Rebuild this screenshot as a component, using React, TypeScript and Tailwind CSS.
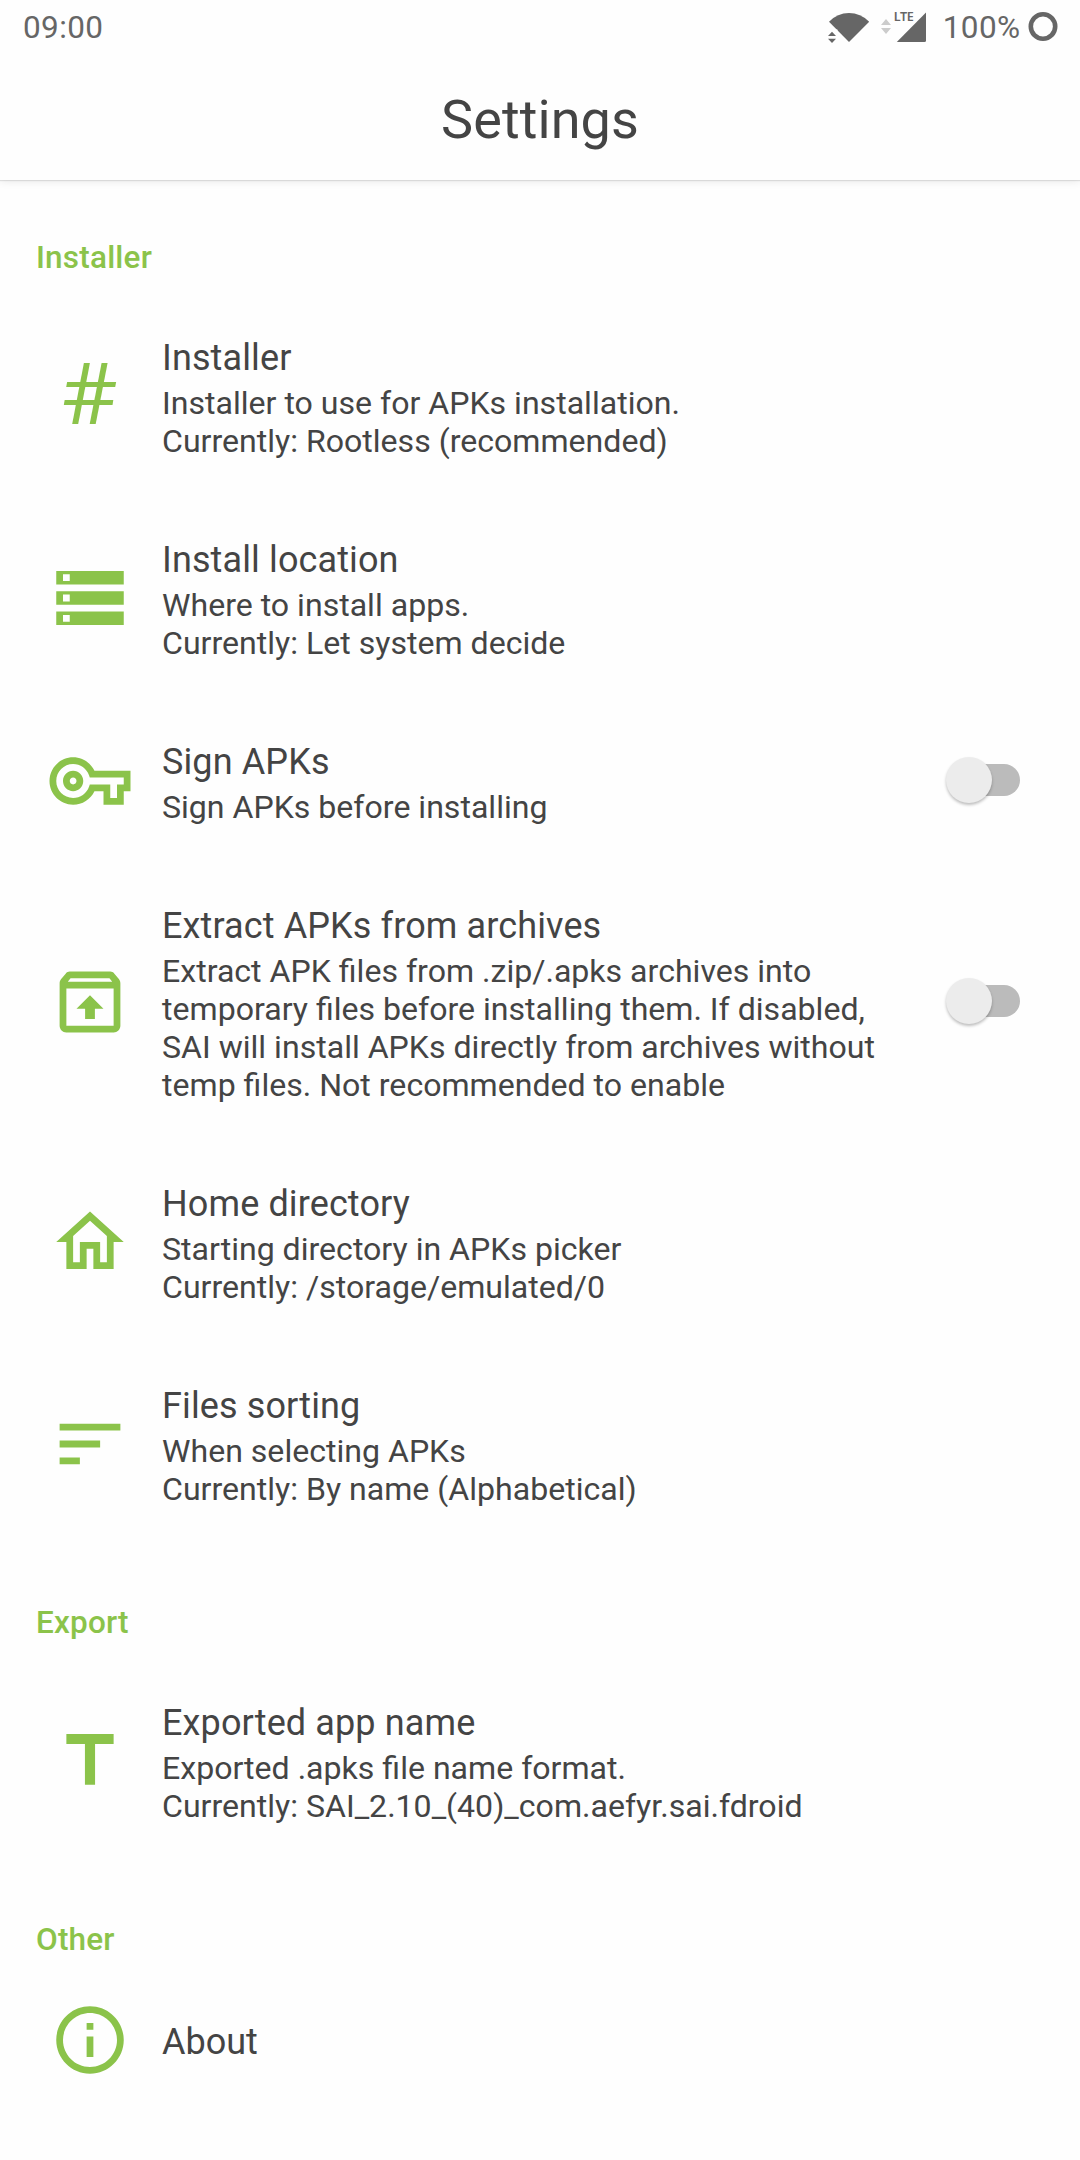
import React, { useState } from "react";

type IconName = "hash" | "storage" | "key" | "unarchive" | "home" | "sort" | "title" | "info";

const iconPaths: Record<Exclude<IconName, "hash">, string> = {
  storage: "M2 20h20v-4H2v4zm2-3h2v2H4v-2zM2 4v4h20V4H2zm4 3H4V5h2v2zm-4 7h20v-4H2v4zm2-3h2v2H4v-2z",
  key: "M22 19h-6v-4h-2.68c-1.14 2.42-3.6 4-6.32 4-3.86 0-7-3.14-7-7s3.14-7 7-7c2.72 0 5.17 1.58 6.32 4H24v6h-2v4zm-4-2h2v-4h2v-2H11.94l-.23-.67C11.01 8.34 9.11 7 7 7c-2.76 0-5 2.24-5 5s2.24 5 5 5c2.11 0 4.01-1.34 4.71-3.33l.23-.67H18v4zM7 15c-1.65 0-3-1.35-3-3s1.35-3 3-3 3 1.35 3 3-1.35 3-3 3zm0-4c-.55 0-1 .45-1 1s.45 1 1 1 1-.45 1-1-.45-1-1-1z",
  unarchive:
    "M20.55 5.22l-1.39-1.68C18.88 3.21 18.47 3 18 3H6c-.47 0-.88.21-1.15.55L3.46 5.22C3.17 5.57 3 6.01 3 6.5V19c0 1.1.89 2 2 2h14c1.1 0 2-.9 2-2V6.5c0-.49-.17-.93-.45-1.28zM6.24 5h11.52l.83 1H5.42l.82-1zM5 19V8h14v11H5zm3-5h2.55v3h2.9v-3H16l-4-4-4 4z",
  home: "M12 5.69l5 4.5V18h-2v-6H9v6H7v-7.81l5-4.5M12 3L2 12h3v8h6v-6h2v6h6v-8h3L12 3z",
  sort: "M3 18h6v-2H3v2zM3 6v2h18V6H3zm0 7h12v-2H3v2z",
  title: "M5 4v3h5.5v12h3V7H19V4z",
  info: "M11 7h2v2h-2zm0 4h2v6h-2zm1-9C6.48 2 2 6.48 2 12s4.48 10 10 10 10-4.48 10-10S17.52 2 12 2zm0 18c-4.41 0-8-3.59-8-8s3.59-8 8-8 8 3.59 8 8-3.59 8-8 8z",
};

function Icon({ name }: { name: IconName }) {
  if (name === "hash") {
    return (
      <svg className="size-[82px]" viewBox="-0.5 -0.5 82 82" fill="currentColor">
        <path d="M34.4 7.5h6L28.7 68.5h-6z" />
        <path d="M52.1 7.5h6L46.2 68.5h-6z" />
        <path d="M17.6 26.5h49l-.9 5h-49z" />
        <path d="M15.2 44.6h48.6l-.8 5H14.3z" />
      </svg>
    );
  }
  return (
    <svg className="size-[82px]" viewBox="-0.148 -0.148 24.296 24.296" fill="currentColor">
      <path d={iconPaths[name]} />
    </svg>
  );
}

function Switch() {
  const [on, setOn] = useState(false);
  return (
    <button
      role="switch"
      aria-checked={on}
      onClick={() => setOn(!on)}
      className="relative mr-[60px] mb-[2px] flex h-12 w-[75px] items-center justify-end"
    >
      <span className={on ? "h-8 w-[64px] rounded-full bg-[#c5e1a5]" : "h-8 w-[64px] rounded-full bg-[#bbbbbb]"} />
      <span
        className={
          on
            ? "absolute top-px right-0 size-[46px] rounded-full bg-[#8bc34a] shadow-[0_2px_3px_rgba(0,0,0,0.3)]"
            : "absolute top-px left-px size-[46px] rounded-full bg-[#ececec] shadow-[0_2px_3px_rgba(0,0,0,0.25)]"
        }
      />
    </button>
  );
}

interface RowProps {
  icon: IconName;
  title: string;
  lines: string[];
  toggle?: boolean;
}

function Row({ icon, title, lines, toggle }: RowProps) {
  return (
    <li className="flex items-center">
      <div className="ml-[49px] w-[113px] shrink-0 text-[#8bc34a]">
        <Icon name={icon} />
      </div>
      <div className="flex-1 pt-[42px] pb-[37px]">
        <h3 className="text-[36px] leading-[42px] tracking-[0.12px]">{title}</h3>
        <p className="mt-[5px] text-[32.1px] leading-[38px]">
          {lines.map((line) => (
            <span key={line} className="block whitespace-nowrap">
              {line}
            </span>
          ))}
        </p>
      </div>
      {toggle && <Switch />}
    </li>
  );
}

function SectionTitle({ children }: { children: string }) {
  return (
    <h2 className="h-[115px] pt-[59px] pl-9 text-[31.5px] leading-[38px] font-medium tracking-[0.2px] text-[#8bc34a]">
      {children}
    </h2>
  );
}

function StatusBar() {
  return (
    <div className="flex h-[54px] items-center justify-between pr-[22px] pl-[23px] text-[31.5px] leading-[38px] tracking-[0.4px] text-[#666666]">
      <span className="pt-[2px]">09:00</span>
      <div className="flex items-center">
        <svg className="h-[54px] w-[42px]" viewBox="0 0 42 54" fill="currentColor">
          <path d="M1 21.700Q9.500 13 21 13T41.200 21.700L21 42z" />
          <path d="M-2 29.500H9.500V44H-2z" fill="#fefefe" />
          <path d="M4 31.800L8 36H0zM4 43L0 38.700H8z" />
        </svg>
        <svg className="ml-[11px] h-[54px] w-[46px]" viewBox="0 0 46 54" fill="currentColor">
          <path d="M5 19L10 25H0zM5 34L0 28H10z" fill="#cccccc" />
          <path d="M45 12.500V40.500Q45 42 43.500 42H15.800z" />
          <text x="12.800" y="21" fontSize="12.600" fontWeight="600" fontFamily="Noto Sans, sans-serif" className="tracking-[-0.4px]">
            LTE
          </text>
        </svg>
        <span className="ml-[16px] pt-[2px]">100%</span>
        <svg className="ml-[7.5px] h-[54px] w-[30px]" viewBox="0 0 30 54" fill="none" stroke="currentColor">
          <circle cx="15" cy="26.500" r="12.200" strokeWidth="4.600" />
        </svg>
      </div>
    </div>
  );
}

const installerRows: RowProps[] = [
  {
    icon: "hash",
    title: "Installer",
    lines: ["Installer to use for APKs installation.", "Currently: Rootless (recommended)"],
  },
  { icon: "storage", title: "Install location", lines: ["Where to install apps.", "Currently: Let system decide"] },
  { icon: "key", title: "Sign APKs", lines: ["Sign APKs before installing"], toggle: true },
  {
    icon: "unarchive",
    title: "Extract APKs from archives",
    lines: [
      "Extract APK files from .zip/.apks archives into",
      "temporary files before installing them. If disabled,",
      "SAI will install APKs directly from archives without",
      "temp files. Not recommended to enable",
    ],
    toggle: true,
  },
  {
    icon: "home",
    title: "Home directory",
    lines: ["Starting directory in APKs picker", "Currently: /storage/emulated/0"],
  },
  { icon: "sort", title: "Files sorting", lines: ["When selecting APKs", "Currently: By name (Alphabetical)"] },
];

export default function App() {
  return (
    <div className="h-[2160px] w-[1080px] overflow-hidden bg-[#fefefe] font-['Roboto',sans-serif] text-[#444444]">
      <header className="relative h-[180px] shadow-[0_1px_1px_rgba(0,0,0,0.1),0_2px_8px_rgba(0,0,0,0.08)]">
        <StatusBar />
        <h1 className="pt-[34px] text-center text-[54px] leading-[64px] tracking-[0.1px]">Settings</h1>
      </header>
      <main>
        <SectionTitle>Installer</SectionTitle>
        <ul>
          {installerRows.map((row) => (
            <Row key={row.title} {...row} />
          ))}
        </ul>
        <SectionTitle>Export</SectionTitle>
        <ul>
          <Row
            icon="title"
            title="Exported app name"
            lines={["Exported .apks file name format.", "Currently: SAI_2.10_(40)_com.aefyr.sai.fdroid"]}
          />
        </ul>
        <SectionTitle>Other</SectionTitle>
        <div className="flex h-[126px] items-center">
          <div className="ml-[49px] w-[113px] shrink-0 text-[#8bc34a]">
            <Icon name="info" />
          </div>
          <h3 className="pt-[4px] text-[36px] leading-[42px]">About</h3>
        </div>
      </main>
    </div>
  );
}
